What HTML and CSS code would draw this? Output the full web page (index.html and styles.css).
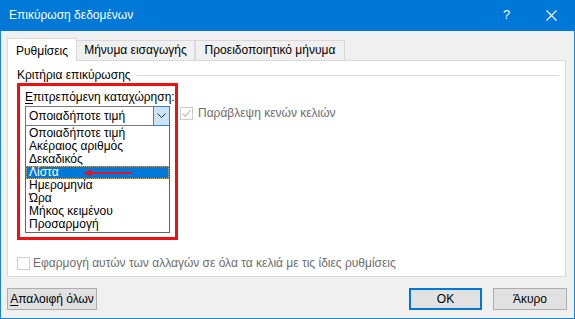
FILE: index.html
```html
<!DOCTYPE html>
<html lang="el">
<head>
<meta charset="utf-8">
<title>Επικύρωση δεδομένων</title>
<link rel="stylesheet" href="styles.css">
</head>
<body>
<div class="window">
  <div class="titlebar">
    <span class="title">Επικύρωση δεδομένων</span>
    <div class="title-btns">
      <span class="help">?</span>
      <svg class="close" width="11" height="11" viewBox="0 0 11 11"><path d="M0.5 0.5 L10.5 10.5 M10.5 0.5 L0.5 10.5" stroke="#fff" stroke-width="1.1" fill="none"/></svg>
    </div>
  </div>
  <div class="body">
    <div class="tabs">
      <div class="tab active">Ρυθμίσεις</div>
      <div class="tab t2">Μήνυμα εισαγωγής</div>
      <div class="tab t3">Προειδοποιητικό μήνυμα</div>
    </div>
    <div class="panel">
      <div class="group-title"><span>Κριτήρια επικύρωσης</span><div class="rule"></div></div>
      <div class="criteria">
        <div class="redbox">
          <div class="label"><u>Ε</u>πιτρεπόμενη καταχώρηση:</div>
          <div class="combo">
            <span class="combo-text">Οποιαδήποτε τιμή</span>
            <span class="combo-btn"><svg width="9" height="6" viewBox="0 0 9 6"><path d="M0.5 0.5 L4.5 4.5 L8.5 0.5" stroke="#333" stroke-width="1" fill="none"/></svg></span>
          </div>
          <div class="listbox">
            <div class="item">Οποιαδήποτε τιμή</div>
            <div class="item">Ακέραιος αριθμός</div>
            <div class="item">Δεκαδικός</div>
            <div class="item selected">Λίστα
              <svg class="arrow" width="50" height="8" viewBox="0 0 50 8"><path d="M49 4 L8 4" stroke="#e81123" stroke-width="2.2"/><path d="M0 4 L9 0.5 L9 7.5 Z" fill="#e81123"/></svg>
            </div>
            <div class="item">Ημερομηνία</div>
            <div class="item">Ώρα</div>
            <div class="item">Μήκος κειμένου</div>
            <div class="item">Προσαρμογή</div>
          </div>
        </div>
        <div class="check-row ignore">
          <span class="checkbox disabled"><svg width="11" height="11" viewBox="0 0 11 11"><path d="M1.5 5.5 L4.2 8.2 L9.5 2.2" stroke="#c6c6c6" stroke-width="1.3" fill="none"/></svg></span>
          <span class="check-label">Παράβλεψη κενών κελιών</span>
        </div>
      </div>
      <div class="check-row apply">
        <span class="checkbox"></span>
        <span class="check-label">Εφαρμογή αυτών των αλλαγών σε όλα τα κελιά με τις ίδιες ρυθμίσεις</span>
      </div>
    </div>
    <div class="footer">
      <button class="btn clear"><u>Α</u>παλοιφή όλων</button>
      <div class="right-btns">
        <button class="btn ok">ΟΚ</button>
        <button class="btn cancel">Άκυρο</button>
      </div>
    </div>
  </div>
</div>
</body>
</html>
```

FILE: styles.css
```css
* { box-sizing: border-box; }
html, body { margin: 0; padding: 0; }
body {
  width: 575px;
  height: 319px;
  overflow: hidden;
  font-family: "Liberation Sans", "DejaVu Sans", sans-serif;
  font-size: 12px;
  color: #000;
  background: #f0f0f0;
  white-space: nowrap;
}
.window {
  width: 575px;
  height: 319px;
  border: 1px solid #1883d7;
  border-top: none;
  background: #f0f0f0;
  display: flex;
  flex-direction: column;
}
.titlebar {
  height: 31px;
  margin: 0 -1px;
  background: #0078d7;
  color: #fff;
  display: flex;
  align-items: center;
  justify-content: space-between;
  padding-left: 9px;
}
.title { font-size: 12px; line-height: 16px; margin-top: -1px; }
.title-btns { display: flex; align-items: center; height: 31px; }
.help { font-size: 13px; width: 8px; margin-right: 35px; line-height: 16px; margin-top: -1px; }
.close { margin-right: 18px; }
.body { flex: 1; padding: 7px 7px 0 6px; display: flex; flex-direction: column; }
.tabs { display: flex; align-items: flex-end; height: 22px; position: relative; z-index: 1; }
.tab {
  height: 20px;
  border: 1px solid #d9d9d9;
  border-bottom: none;
  background: #f0f0f0;
  line-height: 19px;
  text-align: center;
}
.tab.active {
  width: 70px;
  height: 23px;
  background: #fff;
  line-height: 24px;
  margin-bottom: -1px;
}
.tab.t2 { width: 118px; border-left: none; }
.tab.t3 { width: 150px; }
.panel {
  width: 559px;
  height: 217px;
  background: #fff;
  border: 1px solid #d9d9d9;
  padding: 6px 0 0 9px;
  display: flex;
  flex-direction: column;
}
.group-title {
  display: flex;
  align-items: center;
  height: 16px;
  line-height: 16px;
}
.rule { flex: 1; height: 1px; background: #dcdcdc; margin: 1px 6px 0 5px; }
.criteria { display: flex; align-items: flex-start; }
.redbox {
  width: 161px;
  height: 157px;
  border: 3px solid #ee1111;
  padding: 3px 5px 0 5px;
}
.label { line-height: 16px; height: 17px; }
.label u { text-decoration-thickness: 1px; text-underline-offset: 2px; }
.combo {
  height: 20px;
  border: 1px solid #7a7a7a;
  display: flex;
  align-items: center;
  justify-content: space-between;
}
.combo-text { padding-left: 3px; line-height: 16px; }
.combo-btn {
  width: 17px;
  height: 20px;
  margin: -1px -1px -1px 0;
  background: #cce4f7;
  border: 1px solid #3d7fc0;
  display: flex;
  align-items: center;
  justify-content: center;
}
.listbox {
  border: 1px solid #646464;
  border-top: none;
  height: 107px;
  padding-top: 1px;
}
.item {
  height: 13px;
  line-height: 13px;
  padding-left: 3px;
  position: relative;
}
.item.selected {
  background: #0078d7;
  color: #fff;
  outline: 1px dotted #f5a623;
  outline-offset: -1px;
}
.arrow { position: absolute; left: 57px; top: 3px; }
.check-row { display: flex; align-items: center; }
.ignore { margin-left: 2px; margin-top: 22px; }
.checkbox {
  width: 13px;
  height: 13px;
  border: 1px solid #333;
  background: #fff;
  display: inline-flex;
  align-items: center;
  justify-content: center;
}
.checkbox.disabled, .apply .checkbox { border-color: #cccccc; }
.check-label { color: #6d6d6d; margin-left: 5px; line-height: 16px; }
.apply { margin-top: 15px; }
.apply .check-label { margin-left: 3px; }
.footer {
  display: flex;
  justify-content: space-between;
  margin-top: 11px;
}
.right-btns { display: flex; gap: 11px; }
.btn {
  font-family: inherit;
  font-size: 12px;
  height: 22px;
  background: #e1e1e1;
  border: 1px solid #adadad;
  color: #000;
  padding: 0;
  line-height: 18px;
  margin: 0;
  white-space: nowrap;
}
.btn.clear { width: 90px; }
.btn u { text-underline-offset: 2px; }
.btn.ok { width: 73px; border: 2px solid #0078d7; }
.btn.cancel { width: 74px; }
```
